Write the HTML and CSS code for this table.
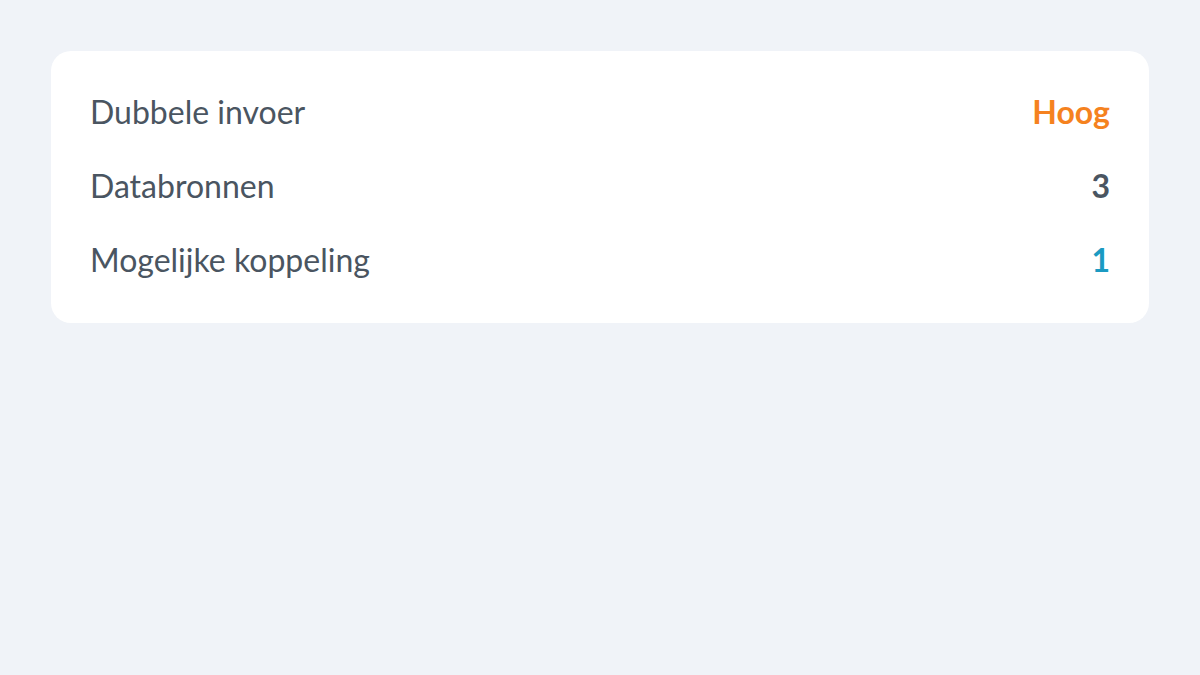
FILE: index.html
```html
<!DOCTYPE html>
<html lang="nl">
<head>
<meta charset="utf-8">
<link rel="stylesheet" href="styles.css">
</head>
<body>
<div class="card">
  <div class="row"><span class="label">Dubbele invoer</span><span class="value high">Hoog</span></div>
  <div class="row"><span class="label">Databronnen</span><span class="value">3</span></div>
  <div class="row"><span class="label">Mogelijke koppeling</span><span class="value link">1</span></div>
</div>
</body>
</html>
```
FILE: styles.css
```css
html, body { margin: 0; padding: 0; }
body {
  background: #f0f3f8;
  font-family: Lato, "Open Sans", sans-serif;
  padding: 51px 51px 0 51px;
}
.card {
  background: #ffffff;
  border-radius: 20px;
  padding: 37px 39px 39px 39px;
  display: flex;
  flex-direction: column;
  gap: 26px;
}
.row {
  display: flex;
  justify-content: space-between;
  align-items: baseline;
  font-size: 32px;
  line-height: 48px;
  color: #4a5561;
}
.value { font-weight: 700; }
.high { color: #f5821f; }
.link { color: #1b9ac2; }
```
